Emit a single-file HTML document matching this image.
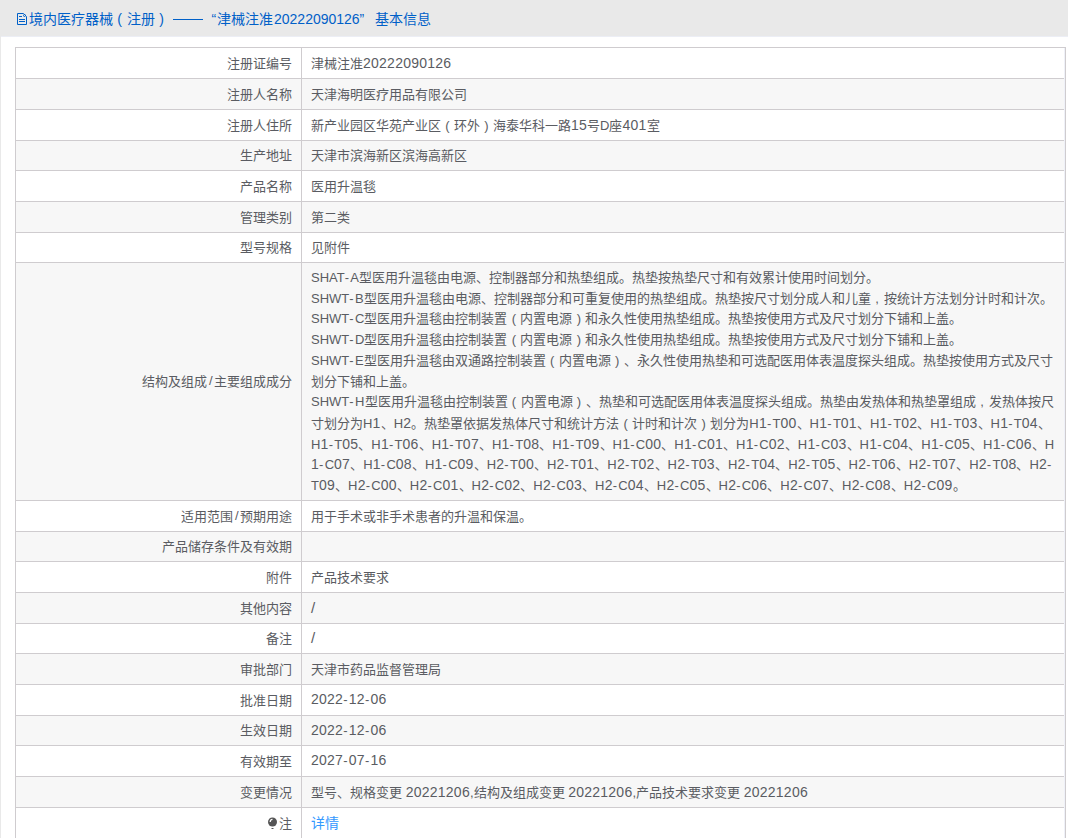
<!DOCTYPE html>
<html lang="zh-CN"><head><meta charset="utf-8">
<style>
html,body{margin:0;padding:0;background:#fff;}
body{width:1068px;height:838px;overflow:hidden;position:relative;font-family:"Liberation Sans",sans-serif;font-size:13px;color:#5a5c62;text-spacing-trim:space-all;}
.hd{position:absolute;left:0;top:0;width:1068px;height:36px;background:#e9e9e9;}
.hdl{position:absolute;left:1px;top:36px;width:1067px;height:1px;background:#eceef5;}
.rstrip{position:absolute;left:1064px;top:48px;width:1px;height:790px;background:#eff1f8;z-index:2;}
.lstrip{position:absolute;left:0;top:36px;width:1px;height:802px;background:#e9e9e9;}
.t{position:absolute;top:1px;height:36px;line-height:36px;font-size:14px;color:#0060c8;white-space:nowrap;}
.ico{position:absolute;left:14px;top:11px;}
.dash{position:absolute;left:173px;top:19px;width:30px;height:1px;background:#0060c8;}
.r{position:absolute;left:15px;width:1051px;box-sizing:border-box;border:1px solid #cfcccf;}
.l{position:absolute;left:0;top:0;bottom:2px;width:285px;display:flex;align-items:center;justify-content:flex-end;padding-right:9px;box-sizing:border-box;white-space:nowrap;}
.v{position:absolute;left:285px;top:-1px;bottom:-1px;padding-bottom:2px;box-sizing:border-box;right:0;border-left:1px solid #cfcccf;display:flex;align-items:center;padding-left:9px;white-space:nowrap;}
.v.big{display:block;}
.bl{position:absolute;left:9px;height:20px;line-height:20px;white-space:nowrap;}
.pin{display:inline-block;width:10px;height:13px;margin-right:1px;vertical-align:middle;position:relative;top:1px;}
.pin svg{display:block;}
.a{letter-spacing:.25px;font-size:14px;}
.h{letter-spacing:.2px;}
.hy{letter-spacing:1.3px;}
.fp{display:inline-block;width:1em;text-align:center;}
.vs{font-size:15px;}
.sl{padding-left:1.5px;letter-spacing:1.5px;}
.detail{color:#3399ff;font-size:14px;}
</style></head><body>
<div class="hd"></div><div class="hdl"></div><div class="lstrip"></div>
<svg class="ico" width="14" height="16" viewBox="14 11 14 16"><g fill="none" stroke="#0060c8" stroke-width="1"><path d="M17.5,13.5 H23.5 L26.5,16.5 V24.5 H17.5 Z"/><circle cx="24.5" cy="15.5" r="1"/><path d="M19,16.5 H22 M19,19.5 H25 M19,21.5 H25"/></g></svg>
<div class="t" style="left:28.5px">境内医疗器械<span class="fp">(</span>注册<span class="fp">)</span></div>
<div class="dash"></div>
<div class="t" style="left:211.5px">“</div>
<div class="t" style="left:217px">津械注准</div>
<div class="t" style="left:274px">20222090126</div>
<div class="t" style="left:359.5px">”</div>
<div class="t" style="left:374.5px">基本信息</div>
<div class="r" style="top:47px;height:32px;background:#fff"><div class="l">注册证编号</div><div class="v"><span>津械注准<span class="a">20222090126</span></span></div></div><div class="r" style="top:78px;height:32px;background:#f7f7f7"><div class="l">注册人名称</div><div class="v"><span>天津海明医疗用品有限公司</span></div></div><div class="r" style="top:109px;height:32px;background:#fff"><div class="l">注册人住所</div><div class="v"><span>新产业园区华苑产业区<span class="fp">(</span>环外<span class="fp">)</span>海泰华科一路<span class="a">15</span>号D座<span class="a">401</span>室</span></div></div><div class="r" style="top:140px;height:31px;background:#f7f7f7"><div class="l">生产地址</div><div class="v"><span>天津市滨海新区滨海高新区</span></div></div><div class="r" style="top:170px;height:32px;background:#fff"><div class="l">产品名称</div><div class="v"><span>医用升温毯</span></div></div><div class="r" style="top:201px;height:32px;background:#f7f7f7"><div class="l">管理类别</div><div class="v"><span>第二类</span></div></div><div class="r" style="top:232px;height:31px;background:#fff"><div class="l">型号规格</div><div class="v"><span>见附件</span></div></div><div class="r" style="top:262px;height:239px;background:#f7f7f7"><div class="l">结构及组成<span class="sl">/</span>主要组成成分</div><div class="v big"><span><div class="bl" style="top:6.0px">SHAT<span class="hy">-</span>A型医用升温毯由电源、控制器部分和热垫组成。热垫按热垫尺寸和有效累计使用时间划分。</div><div class="bl" style="top:26.7px">SHWT<span class="hy">-</span>B型医用升温毯由电源、控制器部分和可重复使用的热垫组成。热垫按尺寸划分成人和儿童<span class="fp">,</span>按统计方法划分计时和计次。</div><div class="bl" style="top:47.4px">SHWT<span class="hy">-</span>C型医用升温毯由控制装置<span class="fp">(</span>内置电源<span class="fp">)</span>和永久性使用热垫组成。热垫按使用方式及尺寸划分下铺和上盖。</div><div class="bl" style="top:68.1px">SHWT<span class="hy">-</span>D型医用升温毯由控制装置<span class="fp">(</span>内置电源<span class="fp">)</span>和永久性使用热垫组成。热垫按使用方式及尺寸划分下铺和上盖。</div><div class="bl" style="top:88.8px">SHWT<span class="hy">-</span>E型医用升温毯由双通路控制装置<span class="fp">(</span>内置电源<span class="fp">)</span>、永久性使用热垫和可选配医用体表温度探头组成。热垫按使用方式及尺寸</div><div class="bl" style="top:109.5px">划分下铺和上盖。</div><div class="bl" style="top:130.2px">SHWT<span class="hy">-</span><span class="h">H</span>型医用升温毯由控制装置<span class="fp">(</span>内置电源<span class="fp">)</span>、热垫和可选配医用体表温度探头组成。热垫由发热体和热垫罩组成<span class="fp">,</span>发热体按尺</div><div class="bl" style="top:150.9px">寸划分为<span class="h">H</span><span class="a">1</span>、<span class="h">H</span><span class="a">2</span>。热垫罩依据发热体尺寸和统计方法<span class="fp">(</span>计时和计次<span class="fp">)</span>划分为<span class="h">H</span><span class="a">1</span><span class="hy">-</span>T<span class="a">00</span>、<span class="h">H</span><span class="a">1</span><span class="hy">-</span>T<span class="a">01</span>、<span class="h">H</span><span class="a">1</span><span class="hy">-</span>T<span class="a">02</span>、<span class="h">H</span><span class="a">1</span><span class="hy">-</span>T<span class="a">03</span>、<span class="h">H</span><span class="a">1</span><span class="hy">-</span>T<span class="a">04</span>、</div><div class="bl" style="top:171.6px"><span class="h">H</span><span class="a">1</span><span class="hy">-</span>T<span class="a">05</span>、<span class="h">H</span><span class="a">1</span><span class="hy">-</span>T<span class="a">06</span>、<span class="h">H</span><span class="a">1</span><span class="hy">-</span>T<span class="a">07</span>、<span class="h">H</span><span class="a">1</span><span class="hy">-</span>T<span class="a">08</span>、<span class="h">H</span><span class="a">1</span><span class="hy">-</span>T<span class="a">09</span>、<span class="h">H</span><span class="a">1</span><span class="hy">-</span>C<span class="a">00</span>、<span class="h">H</span><span class="a">1</span><span class="hy">-</span>C<span class="a">01</span>、<span class="h">H</span><span class="a">1</span><span class="hy">-</span>C<span class="a">02</span>、<span class="h">H</span><span class="a">1</span><span class="hy">-</span>C<span class="a">03</span>、<span class="h">H</span><span class="a">1</span><span class="hy">-</span>C<span class="a">04</span>、<span class="h">H</span><span class="a">1</span><span class="hy">-</span>C<span class="a">05</span>、<span class="h">H</span><span class="a">1</span><span class="hy">-</span>C<span class="a">06</span>、<span class="h">H</span></div><div class="bl" style="top:192.3px"><span class="a">1</span><span class="hy">-</span>C<span class="a">07</span>、<span class="h">H</span><span class="a">1</span><span class="hy">-</span>C<span class="a">08</span>、<span class="h">H</span><span class="a">1</span><span class="hy">-</span>C<span class="a">09</span>、<span class="h">H</span><span class="a">2</span><span class="hy">-</span>T<span class="a">00</span>、<span class="h">H</span><span class="a">2</span><span class="hy">-</span>T<span class="a">01</span>、<span class="h">H</span><span class="a">2</span><span class="hy">-</span>T<span class="a">02</span>、<span class="h">H</span><span class="a">2</span><span class="hy">-</span>T<span class="a">03</span>、<span class="h">H</span><span class="a">2</span><span class="hy">-</span>T<span class="a">04</span>、<span class="h">H</span><span class="a">2</span><span class="hy">-</span>T<span class="a">05</span>、<span class="h">H</span><span class="a">2</span><span class="hy">-</span>T<span class="a">06</span>、<span class="h">H</span><span class="a">2</span><span class="hy">-</span>T<span class="a">07</span>、<span class="h">H</span><span class="a">2</span><span class="hy">-</span>T<span class="a">08</span>、<span class="h">H</span><span class="a">2</span><span class="hy">-</span></div><div class="bl" style="top:213.0px">T<span class="a">09</span>、<span class="h">H</span><span class="a">2</span><span class="hy">-</span>C<span class="a">00</span>、<span class="h">H</span><span class="a">2</span><span class="hy">-</span>C<span class="a">01</span>、<span class="h">H</span><span class="a">2</span><span class="hy">-</span>C<span class="a">02</span>、<span class="h">H</span><span class="a">2</span><span class="hy">-</span>C<span class="a">03</span>、<span class="h">H</span><span class="a">2</span><span class="hy">-</span>C<span class="a">04</span>、<span class="h">H</span><span class="a">2</span><span class="hy">-</span>C<span class="a">05</span>、<span class="h">H</span><span class="a">2</span><span class="hy">-</span>C<span class="a">06</span>、<span class="h">H</span><span class="a">2</span><span class="hy">-</span>C<span class="a">07</span>、<span class="h">H</span><span class="a">2</span><span class="hy">-</span>C<span class="a">08</span>、<span class="h">H</span><span class="a">2</span><span class="hy">-</span>C<span class="a">09</span>。</div></span></div></div><div class="r" style="top:500px;height:32px;background:#fff"><div class="l">适用范围<span class="sl">/</span>预期用途</div><div class="v"><span>用于手术或非手术患者的升温和保温。</span></div></div><div class="r" style="top:531px;height:31px;background:#f7f7f7"><div class="l">产品储存条件及有效期</div><div class="v"><span></span></div></div><div class="r" style="top:561px;height:32px;background:#fff"><div class="l">附件</div><div class="v"><span>产品技术要求</span></div></div><div class="r" style="top:592px;height:32px;background:#f7f7f7"><div class="l">其他内容</div><div class="v"><span><span class="vs">/</span></span></div></div><div class="r" style="top:623px;height:31px;background:#fff"><div class="l">备注</div><div class="v"><span><span class="vs">/</span></span></div></div><div class="r" style="top:653px;height:32px;background:#f7f7f7"><div class="l">审批部门</div><div class="v"><span>天津市药品监督管理局</span></div></div><div class="r" style="top:684px;height:32px;background:#fff"><div class="l">批准日期</div><div class="v"><span><span class="a">2022</span><span class="hy">-</span><span class="a">12</span><span class="hy">-</span><span class="a">06</span></span></div></div><div class="r" style="top:715px;height:31px;background:#f7f7f7"><div class="l">生效日期</div><div class="v"><span><span class="a">2022</span><span class="hy">-</span><span class="a">12</span><span class="hy">-</span><span class="a">06</span></span></div></div><div class="r" style="top:745px;height:32px;background:#fff"><div class="l">有效期至</div><div class="v"><span><span class="a">2027</span><span class="hy">-</span><span class="a">07</span><span class="hy">-</span><span class="a">16</span></span></div></div><div class="r" style="top:776px;height:32px;background:#f7f7f7"><div class="l">变更情况</div><div class="v"><span>型号、规格变更 <span class="a">20221206</span>,结构及组成变更 <span class="a">20221206</span>,产品技术要求变更 <span class="a">20221206</span></span></div></div><div class="r" style="top:807px;height:32px;background:#fff"><div class="l"><span class="pin"><svg width="10" height="13" viewBox="0 0 10 13"><circle cx="4.5" cy="5" r="4.5" fill="#555"/><path d="M2.2,5 A2.5,2.5 0 0 1 4.5,2.4" stroke="#fff" stroke-width="1.2" fill="none"/><rect x="3.5" y="11" width="2" height="1" fill="#555"/></svg></span>注</div><div class="v"><span><span class="detail">详情</span></span></div></div>
<div class="rstrip"></div>
</body></html>
